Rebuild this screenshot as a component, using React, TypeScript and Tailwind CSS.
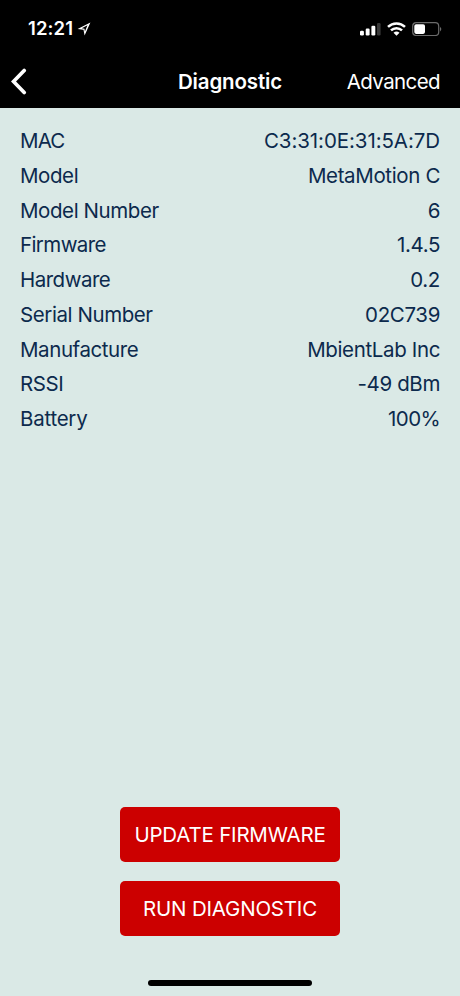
import React from 'react';

const rows = [
  { label: 'MAC', value: 'C3:31:0E:31:5A:7D', labelClass: 'tracking-[-0.8px]', valueClass: 'tracking-[-0.08px]' },
  { label: 'Model', value: 'MetaMotion C' },
  { label: 'Model Number', value: '6' },
  { label: 'Firmware', value: '1.4.5', labelClass: 'tracking-[-0.6px]' },
  { label: 'Hardware', value: '0.2', labelClass: 'tracking-[-0.5px]' },
  { label: 'Serial Number', value: '02C739' },
  { label: 'Manufacture', value: 'MbientLab Inc' },
  { label: 'RSSI', value: '-49 dBm' },
  { label: 'Battery', value: '100%', labelClass: 'tracking-[-0.25px]', valueClass: 'tracking-[-0.6px]' },
];

const App = () => {
  return (
    <div className="flex h-[996px] w-[460px] flex-col bg-[#dae9e6] font-['Inter',sans-serif] text-[20.5px] text-[#0c2a4d]">
      {/* Status Bar */}
      <div className="flex h-[54px] items-center justify-between bg-black pl-7 pr-[18px] pt-[3px] text-white">
        <div className="flex items-center gap-1">
          <span className="pt-[1px] text-[18.5px] font-semibold tracking-[0.1px]">12:21</span>
          <svg width="14" height="14" viewBox="0 0 14 14" fill="white" fillRule="evenodd">
            <path d="M13.4 0.5L0.6 7L6.5 7.8L7.6 13.5ZM10.5 3.2L7.9 9.5L7.5 6.7L4.8 6.2Z" />
          </svg>
        </div>
        <div className="flex items-center gap-[6px]">
          <svg width="21" height="14" viewBox="0 0 21 14" fill="white">
            <rect x="0" y="8.8" width="3.9" height="4.7" rx="1.2" />
            <rect x="5.7" y="6.5" width="3.9" height="7" rx="1.2" />
            <rect x="11.4" y="3.8" width="3.9" height="9.7" rx="1.2" />
            <rect x="17" y="1" width="3.6" height="12.5" rx="1.2" opacity="0.22" />
          </svg>
          <svg width="19" height="14" viewBox="0 0 19 14" fill="none" stroke="white" strokeWidth="2.5">
            <path d="M1 4.9A12.2 12.2 0 0 1 18 4.9" />
            <path d="M4 8.4A7.8 7.8 0 0 1 15 8.4" />
            <path d="M6.5 10.7Q9.5 8.4 12.5 10.7L9.5 13.7Z" fill="white" stroke="none" />
          </svg>
          <svg width="30" height="14" viewBox="0 0 30 14" fill="none">
            <rect x="0.7" y="0.7" width="26" height="12.8" rx="3.5" stroke="#6b6b6b" strokeWidth="1.2" />
            <rect x="2.3" y="2.3" width="10.7" height="9.6" rx="1.8" fill="white" />
            <path d="M28 4.8Q30.6 7.1 28 9.4Z" fill="#6b6b6b" />
          </svg>
        </div>
      </div>

      {/* Navigation */}
      <div className="grid h-[54px] grid-cols-[1fr_auto_1fr] items-center bg-black pl-[11px] pr-5 text-white">
        <svg width="16" height="27" viewBox="0 0 16 27" fill="none" stroke="white" strokeWidth="3.7">
          <path d="M13.2 2.5L2.5 13.5L13.2 24.5" strokeLinecap="round" />
        </svg>
        <h1 className="pl-[9px] pt-[2px] text-center font-semibold tracking-[-0.15px]">Diagnostic</h1>
        <button className="pt-[2px] text-right tracking-[-0.6px]">Advanced</button>
      </div>

      {/* Device Information */}
      <div className="px-5 pt-4">
        {rows.map((row) => (
          <div key={row.label} className="flex h-[34.75px] items-center justify-between">
            <span className={row.labelClass || 'tracking-[-0.42px]'}>{row.label}</span>
            <span className={row.valueClass || 'tracking-[-0.36px]'}>{row.value}</span>
          </div>
        ))}
      </div>

      {/* Actions */}
      <div className="mt-auto flex flex-col items-center gap-[18.5px] pb-[44px] tracking-[-0.2px] text-white">
        <button className="h-[55px] w-[220px] rounded-[5px] bg-[#cc0000] pt-[2px]">UPDATE FIRMWARE</button>
        <button className="h-[55px] w-[220px] rounded-[5px] bg-[#cc0000] pt-[2px]">RUN DIAGNOSTIC</button>
      </div>
      <div className="mb-[10.4px] h-[6px] w-[164px] self-center rounded-full bg-black" />
    </div>
  );
};

export default App;
